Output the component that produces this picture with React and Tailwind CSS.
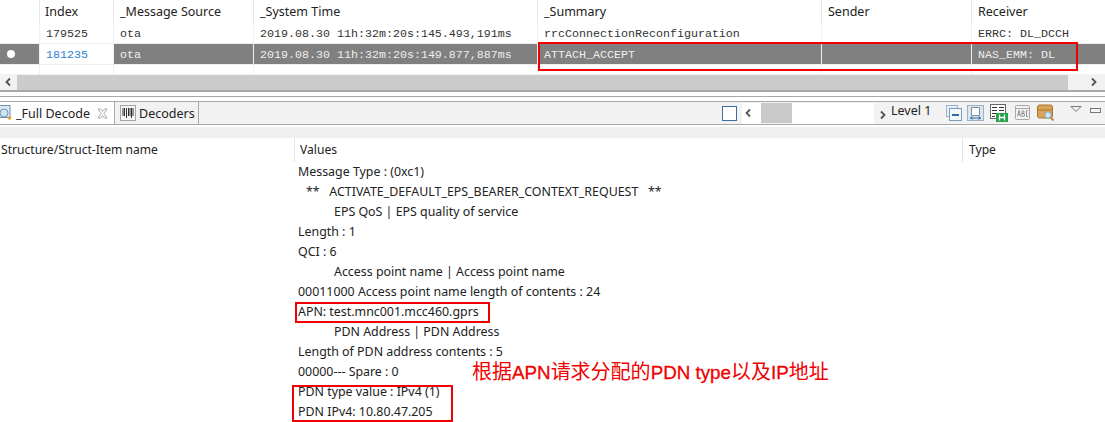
const mono = { fontFamily: '"Liberation Mono", monospace' };

const columns = [
  { name: '', width: 'w-[40px]' },
  { name: 'Index', width: 'w-[74px]' },
  { name: '_Message Source', width: 'w-[140px]' },
  { name: '_System Time', width: 'w-[284px]' },
  { name: '_Summary', width: 'w-[284px]' },
  { name: 'Sender', width: 'w-[150px]' },
  { name: 'Receiver', width: 'flex-1' },
];

const rows = [
  ['', '179525', 'ota', '2019.08.30 11h:32m:20s:145.493,191ms', 'rrcConnectionReconfiguration', '', 'ERRC: DL_DCCH'],
  ['dot', '181235', 'ota', '2019.08.30 11h:32m:20s:149.877,887ms', 'ATTACH_ACCEPT', '', 'NAS_EMM: DL'],
];

const values = [
  ['Message Type : (0xc1)', 'pl-[298px]'],
  ['**   ACTIVATE_DEFAULT_EPS_BEARER_CONTEXT_REQUEST   **', 'pl-[306px]'],
  ['EPS QoS | EPS quality of service', 'pl-[334px]'],
  ['Length : 1', 'pl-[298px]'],
  ['QCI : 6', 'pl-[298px]'],
  ['Access point name | Access point name', 'pl-[334px]'],
  ['00011000 Access point name length of contents : 24', 'pl-[298px]'],
  ['APN: test.mnc001.mcc460.gprs', 'pl-[298px]'],
  ['PDN Address | PDN Address', 'pl-[334px]'],
  ['Length of PDN address contents : 5', 'pl-[298px]'],
  ['00000--- Spare : 0', 'pl-[298px]'],
  ['PDN type value : IPv4 (1)', 'pl-[298px]'],
  ['PDN IPv4: 10.80.47.205', 'pl-[298px]'],
];

function TableHead() {
  return (
    <div className="flex h-[23px] bg-white">
      {columns.map((col, i) => (
        <div key={i} className={`${col.width} ${i === 1 ? 'pl-[5px]' : 'pl-[6px]'} h-[23px] leading-[23px] text-[12.5px] text-[#222] border-r border-[#e6e6e6] last:border-r-0`}>
          {col.name}
        </div>
      ))}
    </div>
  );
}

function TableRow({ cells }) {
  const selected = cells[0] === 'dot';
  return (
    <div className="flex h-[21px] border-b border-[#efefef]">
      {cells.map((cell, i) => {
        let cls = 'text-[#333]';
        if (selected && i !== 1) cls = 'bg-[#808080] text-[#eeeeee]';
        if (selected && i === 1) cls = 'text-[#2a7fd4]';
        return (
          <div key={i} style={mono} className={`${columns[i].width} ${cls} h-[20px] pl-[6px] leading-[22px] text-[11.67px] whitespace-pre border-r border-[#f0f0f0] last:border-r-0`}>
            {cell === 'dot' ? <span className="block w-[8px] h-[8px] mt-[6px] ml-[1px] rounded-full bg-white" /> : cell}
          </div>
        );
      })}
    </div>
  );
}

function EmptyRow() {
  return (
    <div className="flex h-[9px]">
      {columns.map((col, i) => (
        <div key={i} className={`${col.width} border-r border-[#f0f0f0] last:border-r-0`} />
      ))}
    </div>
  );
}

function ScrollBar() {
  return (
    <div className="flex h-[16px] items-center bg-[#f2f2f2]">
      <svg width="17" height="16" viewBox="0 0 17 16" className="shrink-0">
        <path d="M10 4.5 L6.5 8 L10 11.5" fill="none" stroke="#555" strokeWidth="1.8" />
      </svg>
      <div className="w-[1051px] h-[15px] bg-[#cbcbcb]" />
      <svg width="37" height="16" viewBox="0 0 37 16" className="shrink-0">
        <path d="M24 4.5 L27.5 8 L24 11.5" fill="none" stroke="#555" strokeWidth="1.8" />
      </svg>
    </div>
  );
}

function DecodeIcon() {
  return (
    <svg width="13" height="18" viewBox="0 0 13 18" className="shrink-0">
      <rect x="-4" y="1.5" width="14" height="12" fill="#dbe8f4" stroke="#6d8eb0" />
      <circle cx="4" cy="9" r="4" fill="#cfe3f2" stroke="#7296b5" />
      <circle cx="9.5" cy="14" r="1.8" fill="#e2a23c" />
    </svg>
  );
}

function CloseIcon() {
  return (
    <svg width="11" height="11" viewBox="0 0 11 11" className="block shrink-0">
      <path d="M1 1h2.5L5.5 3.5 7.5 1H10L7 5.5 10 10H7.5L5.5 7.5 3.5 10H1L4 5.5z" fill="#fff" stroke="#a0a0a0" strokeWidth="0.9" />
    </svg>
  );
}

function BarcodeIcon() {
  return (
    <svg width="16" height="16" viewBox="0 0 16 16" className="shrink-0">
      <rect x="0.5" y="0.5" width="15" height="15" fill="#f5f5f5" stroke="#a5a5a5" />
      <path d="M3 3v8M4.5 3v8M6.5 3v10M8.5 3v8M10 3v8M11.5 3v10M13 3v8" stroke="#333" fill="none" />
    </svg>
  );
}

function ToolIcons() {
  return (
    <div className="flex items-center gap-[5px]">
      <svg width="16" height="16" viewBox="0 0 16 16" className="shrink-0">
        <rect x="0.5" y="0.5" width="11" height="11" fill="#e6eef6" stroke="#9ab4cc" />
        <rect x="3.5" y="3.5" width="12" height="12" fill="#f4f8fc" stroke="#7c9cbc" />
        <path d="M6 10h7" stroke="#2f6ca6" strokeWidth="2" />
      </svg>
      <svg width="17" height="17" viewBox="0 0 17 17" className="shrink-0">
        <rect x="0.5" y="0.5" width="16" height="15" fill="#dce6f0" stroke="#9fb2c4" />
        <path d="M4.5 2.5h8v8h-8z" fill="#fff" stroke="#7b8ea2" />
        <path d="M3 13h11M5.5 11.5 3.5 13l2 1.5M11.5 11.5l2 1.5-2 1.5" stroke="#2a6aa8" fill="none" />
      </svg>
      <svg width="18" height="18" viewBox="0 0 18 18" className="ml-[1px] shrink-0">
        <rect x="0.5" y="0.5" width="15" height="14" fill="#fff" stroke="#666" />
        <path d="M2 3.5h5M9 3.5h5M2 6.5h5M9 6.5h5M2 9.5h4M2 12.5h3" stroke="#333" />
        <rect x="6" y="9" width="12" height="9" fill="#22a24a" />
        <path d="M9.5 10.5v6M14.5 10.5v6M9.5 13.5h5" stroke="#fff" strokeWidth="1.3" />
      </svg>
      <svg width="16" height="16" viewBox="0 0 16 16" className="ml-[2px] shrink-0">
        <rect x="0.5" y="0.5" width="14" height="14" rx="1" fill="#f2f2f2" stroke="#a8a8a8" />
        <path d="M1 3.5h13" stroke="#a8a8a8" />
        <path d="M2.5 11.5l1.5-6 1.5 6M3 9.5h2M7 5.5v6h1.5q1 0 1-1.5t-1-1.5H7M7 8.5h1q1 0 1-1.5t-1-1.5M13 5.5h-1.5v6H13" stroke="#8a8a8a" fill="none" strokeWidth="0.9" />
      </svg>
      <svg width="18" height="18" viewBox="0 0 18 18" className="ml-[1px] shrink-0">
        <rect x="0.5" y="1" width="15" height="13" rx="2" fill="#d9a455" stroke="#a8762e" />
        <path d="M1 6h14" stroke="#a8762e" />
        <circle cx="11" cy="11" r="3.2" fill="#cfe6f5" stroke="#7ea4c0" />
        <path d="M13.5 13.5l3 3" stroke="#c28a36" strokeWidth="2" />
      </svg>
    </div>
  );
}

function TabBar() {
  return (
    <div className="flex h-[24px] mt-[4px] bg-white border-b border-[#a8a8a8] border-t border-t-[#a8a8a8]">
      <div className="flex items-center w-[114px] h-[22px] bg-white">
        <DecodeIcon />
        <span className="ml-[3px] pt-[2px] text-[12.5px] text-[#222]">_Full Decode</span>
        <span className="ml-[7px]"><CloseIcon /></span>
      </div>
      <div className="flex items-center w-[85px] h-[22px] bg-[#f2f2f2] border-l border-r border-[#a8a8a8] pl-[5px]">
        <BarcodeIcon />
        <span className="ml-[3px] pt-[2px] text-[12.5px] text-[#222]">Decoders</span>
      </div>
      <div className="flex-1 flex items-center bg-[#f2f2f2] h-[22px]">
        <div className="ml-[523px] w-[15px] h-[15px] bg-white border border-[#3a6ea5]" />
        <div className="flex items-center ml-[5px] w-[19px] h-[21px] bg-white">
          <svg width="12" height="12" viewBox="0 0 12 12"><path d="M8 2.5 L4.5 6 L8 9.5" fill="none" stroke="#555" strokeWidth="1.8" /></svg>
        </div>
        <div className="w-[31px] h-[20px] bg-[#c9c9c9]" />
        <div className="w-[82px] h-[21px] bg-white" />
        <svg width="12" height="12" viewBox="0 0 12 12" className="ml-[3px] mt-[3px]"><path d="M4 2.5 L7.5 6 L4 9.5" fill="none" stroke="#555" strokeWidth="1.8" /></svg>
        <span className="ml-[2px] mb-[3px] text-[12.5px] text-[#222]">Level 1</span>
        <div className="ml-[15px]"><ToolIcons /></div>
        <svg width="14" height="10" viewBox="0 0 14 10" className="ml-[15px] mb-[6px]"><path d="M1 1.5h10L6 6.5z" fill="none" stroke="#777" /></svg>
        <div className="ml-[6px] mb-[6px] w-[11px] h-[5px] bg-[#f5f5f5] border border-[#777]" />
      </div>
    </div>
  );
}

function DecodeHead() {
  return (
    <div className="flex h-[24px] leading-[24px] text-[12.1px] text-[#222]">
      <div className="w-[295px] pl-[1px] border-r border-[#e4e4e4]">Structure/Struct-Item name</div>
      <div className="w-[668px] pl-[5px] border-r border-[#e4e4e4]">Values</div>
      <div className="flex-1 pl-[6px]">Type</div>
    </div>
  );
}

export default function App() {
  return (
    <div className="relative w-[1105px] h-[422px] overflow-hidden bg-white" style={{ fontFamily: '"Noto Sans", "Liberation Sans", sans-serif' }}>
      <TableHead />
      {rows.map((r) => <TableRow key={r[1]} cells={r} />)}
      <EmptyRow />
      <ScrollBar />
      <div className="h-[2px] bg-[#a8a8a8]" />
      <div className="h-[1px] mt-[4px] bg-[#a8a8a8]" />
      <TabBar />
      <div className="h-[11px] mt-[2px] bg-[#efefef]" />
      <DecodeHead />
      <div className="text-[12.4px] leading-[20px] text-[#222]">
        {values.map(([text, pad]) => (
          <div key={text} className={`${pad} whitespace-pre h-[20px]`}>{text}</div>
        ))}
      </div>

      {/* red annotation boxes drawn over the capture */}
      <div className="absolute left-[538px] top-[42px] w-[540px] h-[29px] border-2 border-[#f00000]" />
      <div className="absolute left-[295px] top-[302px] w-[195px] h-[21px] border-2 border-[#f00000]" />
      <div className="absolute left-[292px] top-[385px] w-[161px] h-[37px] border-2 border-[#f00000]" />
      <div className="absolute left-[472px] top-[360px] text-[20px] leading-[24px] text-[#f00000] whitespace-pre" style={{ fontFamily: '"Liberation Sans", "Noto Sans CJK SC", sans-serif' }}>
        根据<span className="text-[18.8px] [-webkit-text-stroke:0.3px_#f00000]">APN</span>请求分配的<span className="text-[18.8px] [-webkit-text-stroke:0.3px_#f00000]">PDN type</span>以及<span className="text-[18.8px] [-webkit-text-stroke:0.3px_#f00000]">IP</span>地址
      </div>
    </div>
  );
}
